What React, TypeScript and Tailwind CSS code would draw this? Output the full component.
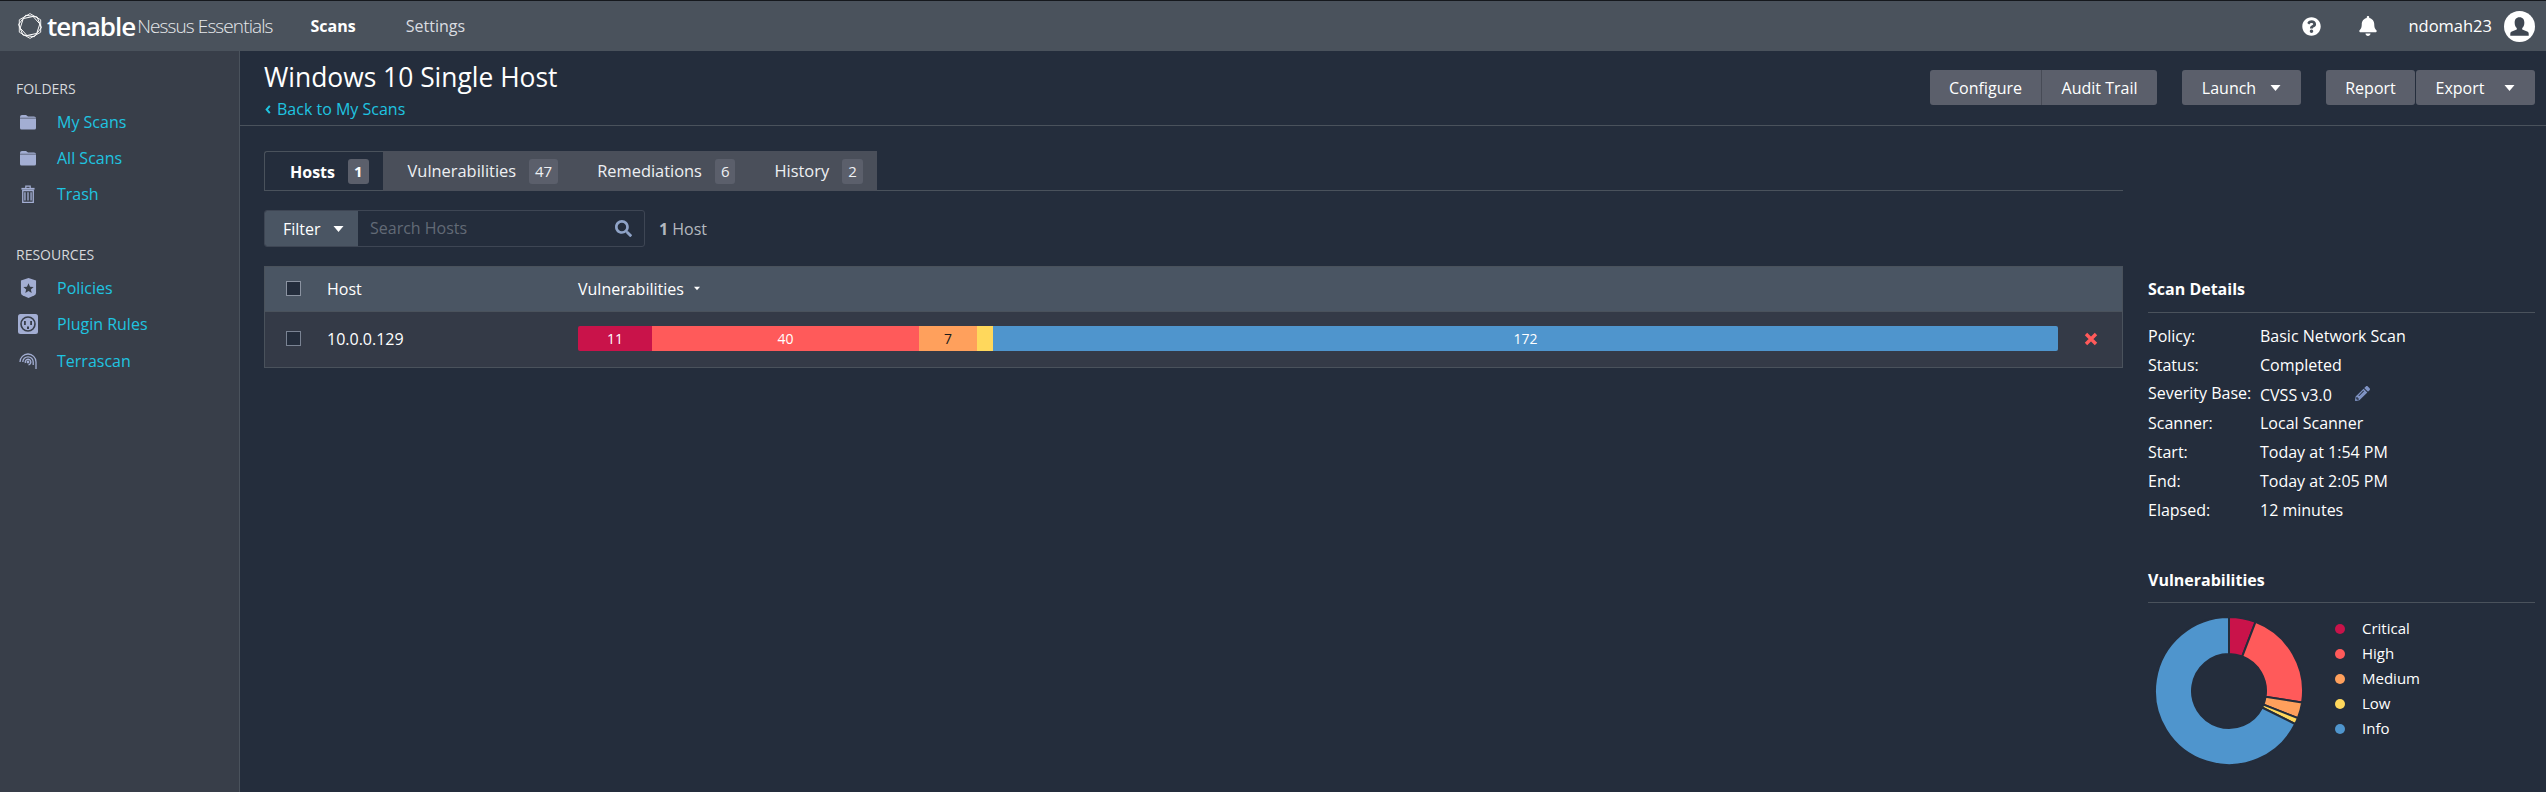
import React from "react";
import { FaBell, FaPencilAlt, FaQuestionCircle, FaSearch } from "react-icons/fa";

const Caret = ({ className = "w-[11px] h-[6px]" }: { className?: string }) => (
  <svg viewBox="0 0 10 6" className={className}>
    <polygon points="0,0 10,0 5,6" fill="#fff" />
  </svg>
);

const FolderIcon = () => (
  <svg viewBox="0 0 18 16" className="w-[18px] h-[16px]">
    <path d="M1 3 Q1 1 3 1 H7 L9 2.5 H15 Q17 2.5 17 4 V14 Q17 15.5 15.5 15.5 H2.5 Q1 15.5 1 14 Z" fill="#a3aed3" />
    <path d="M1 4.2 H17" stroke="#383e49" strokeWidth="0.6" />
  </svg>
);

const TrashIcon = () => (
  <svg viewBox="0 0 16 20" className="w-[14px] h-[18px]">
    <path d="M5.5 3 V1 H10.5 V3" fill="none" stroke="#a3aed3" strokeWidth="1.4" />
    <rect x="0.5" y="3" width="15" height="2" fill="#a3aed3" />
    <path d="M2 6 H14 V19.5 H2 Z M4.5 8 V17.5 M8 8 V17.5 M11.5 8 V17.5" fill="none" stroke="#a3aed3" strokeWidth="1.5" />
  </svg>
);

const ShieldIcon = () => (
  <svg viewBox="0 0 18 22" className="w-[17px] h-[22px]">
    <path d="M9 0.5 L17 3 V16 Q17 18 15 19 L9 21.5 L3 19 Q1 18 1 16 V3 Z" fill="#a3aed3" />
    <polygon points="9,6 10.6,9.6 14.4,10 11.5,12.5 12.4,16.2 9,14.2 5.6,16.2 6.5,12.5 3.6,10 7.4,9.6" fill="#383e49" />
  </svg>
);

const OutletIcon = () => (
  <svg viewBox="0 0 20 20" className="w-[20px] h-[20px]">
    <rect width="20" height="20" rx="2.5" fill="#a3aed3" />
    <circle cx="10" cy="10" r="7" fill="none" stroke="#383e49" strokeWidth="1.6" />
    <rect x="6" y="7" width="1.8" height="4" fill="#383e49" />
    <rect x="12.2" y="7" width="1.8" height="4" fill="#383e49" />
    <rect x="9" y="12.5" width="2" height="2.5" fill="#383e49" />
  </svg>
);

const TerrascanIcon = () => (
  <svg viewBox="0 0 18 20" className="w-[18px] h-[20px]" fill="none" stroke="#a3aed3" strokeWidth="1.3">
    <path d="M1 11 A8 8 0 0 1 17 11 V18" />
    <path d="M3.8 11 A5.2 5.2 0 0 1 14.2 11 V14" />
    <path d="M6.4 12 A2.8 2.8 0 1 1 9.5 13.8" />
    <circle cx="9" cy="11" r="0.8" fill="#a3aed3" />
  </svg>
);

const LogoMark = () => (
  <svg viewBox="0 0 26 26" className="w-[26px] h-[26px]" fill="none" stroke="#fff" strokeWidth="0.9" strokeLinejoin="round">
    <polygon points="13,0.6 23.7,6.8 23.7,19.2 13,25.4 2.3,19.2 2.3,6.8" />
    <polygon points="13,3 21.7,8 21.7,18 13,23 4.3,18 4.3,8" transform="rotate(18 13 13)" />
    <polygon points="13,1.5 23,7.2 23,18.8 13,24.5 3,18.8 3,7.2" transform="rotate(38 13 13)" />
  </svg>
);

const Avatar = () => (
  <svg viewBox="0 0 32 32" className="w-[31px] h-[31px]">
    <circle cx="16" cy="16" r="16" fill="#fff" />
    <path d="M16 6.5 C12.5 6.5 11 9 11 12 C11 14.5 12 16.5 13.2 17.6 V19 L7.5 21.5 C6.8 21.9 6.5 22.5 6.5 23.5 V25.5 H25.5 V23.5 C25.5 22.5 25.2 21.9 24.5 21.5 L18.8 19 V17.6 C20 16.5 21 14.5 21 12 C21 9 19.5 6.5 16 6.5 Z" fill="#3f4752" />
  </svg>
);

const polar = (r: number, deg: number) => {
  const a = ((deg - 90) * Math.PI) / 180;
  return `${(76 + r * Math.cos(a)).toFixed(2)} ${(76 + r * Math.sin(a)).toFixed(2)}`;
};

const slice = (from: number, to: number) => {
  const large = to - from > 180 ? 1 : 0;
  return `M${polar(74, from)} A74 74 0 ${large} 1 ${polar(74, to)} L${polar(37, to)} A37 37 0 ${large} 0 ${polar(37, from)} Z`;
};

const donut = [
  { from: 0, to: 21, color: "#c9134a" },
  { from: 21, to: 99, color: "#ff5a5a" },
  { from: 99, to: 111.5, color: "#ffa05c" },
  { from: 111.5, to: 116.5, color: "#ffd85c" },
  { from: 116.5, to: 360, color: "#4f95cd" },
];

const legend = [
  { name: "Critical", dot: "bg-[#c9134a]" },
  { name: "High", dot: "bg-[#ff5a5a]" },
  { name: "Medium", dot: "bg-[#ffa05c]" },
  { name: "Low", dot: "bg-[#ffd85c]" },
  { name: "Info", dot: "bg-[#4f95cd]" },
];

const details = [
  ["Policy:", "Basic Network Scan"],
  ["Status:", "Completed"],
  ["Severity Base:", "CVSS v3.0"],
  ["Scanner:", "Local Scanner"],
  ["Start:", "Today at 1:54 PM"],
  ["End:", "Today at 2:05 PM"],
  ["Elapsed:", "12 minutes"],
];

const NavItem = ({ icon, label }: { icon: React.ReactNode; label: string }) => (
  <div className="flex items-center h-[36px]">
    <div className="w-[57px] pr-[1px] flex justify-center shrink-0">{icon}</div>
    <span className="text-[16px] text-[#1fc4e0]">{label}</span>
  </div>
);

const Tab = ({ label, count, active }: { label: string; count: string; active?: boolean }) => (
  <div
    className={
      active
        ? "h-[40px] pl-[25px] pr-[14px] flex items-center rounded-tl-[3px] border-l border-t border-[#4a525c] text-white font-bold"
        : "h-[40px] pl-[25px] pr-[14px] flex items-center bg-[#4a4f5a] text-[#eef0f3]"
    }
  >
    <span className={active ? "text-[16px]" : "text-[16.4px]"}>{label}</span>
    <span className={`ml-[13px] px-[6px] h-[25px] flex items-center rounded-[3px] bg-[#5b5f6b] text-[15px] ${active ? "font-bold" : "font-normal"}`}>
      {count}
    </span>
  </div>
);

const Btn = ({ className, children }: { className: string; children: React.ReactNode }) => (
  <div className={`h-[35px] flex items-center justify-center bg-[#5b5f6b] text-[16px] text-white ${className}`}>
    {children}
  </div>
);

const App = () => {
  return (
    <div className="w-[2546px] h-[792px] overflow-hidden flex flex-col bg-[#242d3c] text-white font-['Open_Sans',sans-serif]">
      {/* Top bar */}
      <header className="h-[51px] shrink-0 border-t border-[#15181d] bg-[#4a525c] flex items-center pl-[17px] pr-[11px]">
        <LogoMark />
        <span className="ml-[4px] text-[26px] font-semibold tracking-[-1px] leading-none">tenable</span>
        <span className="ml-[2px] text-[19px] text-[#e6e8eb] tracking-[-0.9px] font-light leading-none">Nessus Essentials</span>
        <span className="ml-[38px] text-[16px] font-bold">Scans</span>
        <span className="ml-[50px] text-[16px] text-[#dadde1]">Settings</span>
        <div className="ml-auto flex items-center">
          <FaQuestionCircle className="text-white text-[19px]" />
          <FaBell className="ml-[37px] text-white text-[20px]" />
          <span className="ml-[30px] text-[16.5px]">ndomah23</span>
          <div className="ml-[12px]">
            <Avatar />
          </div>
        </div>
      </header>

      <div className="flex-1 flex min-h-0">
        {/* Sidebar */}
        <aside className="w-[240px] shrink-0 bg-[#383e49] border-r border-[#4a525c] pt-[29px]">
          <div className="pl-[16px] text-[14px] text-[#d6d8dc] leading-[18px] mb-[6px]">FOLDERS</div>
          <NavItem icon={<FolderIcon />} label="My Scans" />
          <NavItem icon={<FolderIcon />} label="All Scans" />
          <NavItem icon={<TrashIcon />} label="Trash" />
          <div className="pl-[16px] mt-[34px] text-[14px] text-[#d6d8dc] leading-[18px] mb-[6px]">RESOURCES</div>
          <NavItem icon={<ShieldIcon />} label="Policies" />
          <NavItem icon={<OutletIcon />} label="Plugin Rules" />
          <div className="mt-[1px]">
            <NavItem icon={<TerrascanIcon />} label="Terrascan" />
          </div>
        </aside>

        <main className="flex-1 min-w-0 flex flex-col">
          {/* Page header */}
          <div className="h-[75px] shrink-0 border-b border-[#4a525c] pl-[24px] pr-[11px] flex items-start justify-between">
            <div className="pt-[9px]">
              <h1 className="text-[26.4px] leading-[34px] text-white">Windows 10 Single Host</h1>
              <div className="flex items-center text-[16px] text-[#1fc4e0] leading-[20px] mt-[5px]">
                <svg viewBox="0 0 6 10" className="w-[6px] h-[9px] ml-[1px] mr-[6px]" fill="none" stroke="#1fc4e0" strokeWidth="2.2">
                  <path d="M5 1 L1.5 5 L5 9" />
                </svg>
                Back to My Scans
              </div>
            </div>
            <div className="flex items-center pt-[19px]">
              <Btn className="w-[112px] rounded-l-[3px] border-r border-[#474b56]">Configure</Btn>
              <Btn className="w-[115px] rounded-r-[3px]">Audit Trail</Btn>
              <Btn className="ml-[25px] w-[119px] rounded-[3px] gap-[14px]">
                Launch <Caret />
              </Btn>
              <Btn className="ml-[25px] w-[89px] rounded-[3px]">Report</Btn>
              <Btn className="ml-[1px] w-[119px] rounded-[3px] gap-[20px]">
                Export <Caret />
              </Btn>
            </div>
          </div>

          <div className="flex-1 flex pl-[24px] pr-[11px] min-h-0">
            {/* Left column */}
            <div className="w-[1859px] shrink-0 pt-[25px]">
              <div className="flex border-b border-[#4a525c] h-[40px]">
                <Tab label="Hosts" count="1" active />
                <Tab label="Vulnerabilities" count="47" />
                <Tab label="Remediations" count="6" />
                <Tab label="History" count="2" />
              </div>

              <div className="flex items-center mt-[19px]">
                <div className="w-[381px] h-[37px] flex rounded-[3px] border border-[#3e4654] overflow-hidden">
                  <div className="w-[93px] bg-[#4a5563] flex items-center pl-[18px] gap-[12px] text-[16px]">
                    Filter <Caret />
                  </div>
                  <div className="flex-1 flex items-center justify-between pl-[12px] pr-[12px] pb-[1px]">
                    <span className="text-[16px] text-[#626a76]">Search Hosts</span>
                    <FaSearch className="text-[#8fa3c7] text-[17px]" />
                  </div>
                </div>
                <span className="ml-[14px] text-[16px] text-[#b4b8bf]">
                  <b>1</b> Host
                </span>
              </div>

              <div className="mt-[19px] border border-[#4a525c]">
                <div className="h-[44px] pb-[1px] bg-[#4a5563] flex items-center text-[16px]">
                  <span className="ml-[21px] w-[15px] h-[15px] border border-[#8b93a1] bg-[#242d3c]" />
                  <span className="ml-[26px] w-[251px]">Host</span>
                  <span>Vulnerabilities</span>
                  <Caret className="ml-[10px] w-[6px] h-[5px]" />
                </div>
                <div className="h-[56px] pb-[2px] bg-[#343a47] flex items-center border-t border-[#4a525c] text-[16px]">
                  <span className="ml-[21px] w-[15px] h-[15px] border border-[#7a8393] bg-[#242d3c]" />
                  <span className="ml-[26px] w-[251px]">10.0.0.129</span>
                  <div className="flex h-[25px] w-[1480px] rounded-[2px] overflow-hidden text-[14px]">
                    <div className="w-[74px] bg-[#c9134a] flex items-center justify-center">11</div>
                    <div className="w-[267px] bg-[#ff5a5a] flex items-center justify-center">40</div>
                    <div className="w-[58px] bg-[#ffa05c] flex items-center justify-center text-[#1b1b1b]">7</div>
                    <div className="w-[16px] bg-[#ffd85c]" />
                    <div className="flex-1 bg-[#4f95cd] flex items-center justify-center">172</div>
                  </div>
                  <svg viewBox="0 0 14 14" className="ml-[26px] w-[14px] h-[14px]">
                    <path d="M2 2 L12 12 M12 2 L2 12" stroke="#ff5a5a" strokeWidth="3.4" />
                  </svg>
                </div>
              </div>
            </div>

            {/* Right column */}
            <aside className="ml-[25px] flex-1 pt-[153px] text-[16px]">
              <div className="font-bold leading-[20px] pb-[13px] border-b border-[#4a525c]">Scan Details</div>
              <div className="pt-[8px]">
                {details.map(([k, v]) => (
                  <div key={k} className="flex items-center h-[29px]">
                    <span className={k === "Severity Base:" ? "w-[112px] shrink-0 mb-[2px]" : "w-[112px] shrink-0"}>{k}</span>
                    <span className={k === "Severity Base:" ? "mt-[2px]" : ""}>{v}</span>
                    {k === "Severity Base:" && <FaPencilAlt className="ml-[23px] text-[15px] text-[#7f93c4]" />}
                  </div>
                ))}
              </div>
              <div className="mt-[46px] font-bold leading-[20px] pb-[12px] border-b border-[#4a525c]">Vulnerabilities</div>
              <div className="flex pt-[12px] pl-[5px]">
                <svg viewBox="0 0 152 152" className="w-[152px] h-[152px] shrink-0">
                  {donut.map((d) => (
                    <path key={d.color} d={slice(d.from, d.to)} fill={d.color} stroke="#242d3c" strokeWidth="2" />
                  ))}
                </svg>
                <div className="ml-[30px] pt-[1px] flex flex-col">
                  {legend.map((l) => (
                    <div key={l.name} className="h-[25px] flex items-center text-[15px]">
                      <span className={`w-[10px] h-[10px] rounded-full ${l.dot}`} />
                      <span className="ml-[17px]">{l.name}</span>
                    </div>
                  ))}
                </div>
              </div>
            </aside>
          </div>
        </main>
      </div>
    </div>
  );
};

export default App;
